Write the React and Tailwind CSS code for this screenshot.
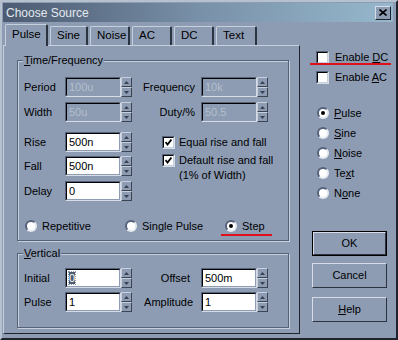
import React from "react";

const Spinner = () => (
  <div className="flex flex-col w-[11px] h-[20px]">
    {[0, 1].map((i) => (
      <div
        key={i}
        className="flex-1 flex items-center justify-center bg-[#8d9cb3] border border-t-[#c6d0dc] border-l-[#c6d0dc] border-r-[#3c4454] border-b-[#3c4454]"
      >
        <svg width="5" height="3" viewBox="0 0 5 3">
          {i === 0 ? (
            <polygon points="2.5,0 5,3 0,3" fill="#3a4150" />
          ) : (
            <polygon points="0,0 5,0 2.5,3" fill="#3a4150" />
          )}
        </svg>
      </div>
    ))}
  </div>
);

const Field = ({ value, disabled, selected }) => (
  <div className="flex items-center">
    <div className="w-[56px] h-[20px] border border-t-[#56627a] border-l-[#56627a] border-r-[#d6dde6] border-b-[#d6dde6]">
      <div
        className={`h-full border border-t-black border-l-black border-r-[#8d9cb3] border-b-[#8d9cb3] pl-[2px] leading-[16px] ${
          disabled ? "bg-[#8d9cb3] text-[#b4bfcd]" : "bg-white text-black"
        }`}
      >
        {selected ? (
          <span className="bg-[#4c5b71] text-white outline outline-1 outline-dotted outline-[#8d9cb3]">
            {value}
          </span>
        ) : (
          value
        )}
      </div>
    </div>
    <Spinner />
  </div>
);

const Check = ({ checked }) => (
  <div className="w-[13px] h-[13px] shrink-0 bg-white border border-t-[#56627a] border-l-[#56627a] border-r-[#d6dde6] border-b-[#d6dde6]">
    <div className="w-full h-full border border-t-black border-l-black border-r-[#c6d0dc] border-b-[#c6d0dc] flex items-center justify-center">
      {checked && (
        <svg width="7" height="7" viewBox="0 0 7 7">
          <path d="M0.5 3 L2.5 5.5 L6.5 0.5" stroke="black" strokeWidth="1.8" fill="none" />
        </svg>
      )}
    </div>
  </div>
);

const Radio = ({ checked }) => (
  <div className="w-[12px] h-[12px] shrink-0 rounded-full bg-white border-2 border-t-[#56627a] border-l-[#56627a] border-r-[#e4e9ef] border-b-[#e4e9ef] flex items-center justify-center">
    {checked && <div className="w-[4px] h-[4px] rounded-full bg-black" />}
  </div>
);

const Group = ({ label, className, children }) => (
  <div
    className={`relative border border-[#56627a] shadow-[1px_1px_0_#c6d0dc,inset_1px_1px_0_#c6d0dc] ${className}`}
  >
    <div className="absolute -top-[8px] left-[5px] bg-[#8d9cb3] px-[1px] leading-[14px]">
      {label}
    </div>
    {children}
  </div>
);

const Button = ({ children, isDefault }) => (
  <div
    className={`w-[75px] h-[25px] ${isDefault ? "border border-black" : ""}`}
  >
    <div className="h-full flex items-center justify-center border border-t-[#d6dde6] border-l-[#d6dde6] border-r-[#2c3340] border-b-[#2c3340]">
      {children}
    </div>
  </div>
);

const tabs = [
  ["Pulse", 43],
  ["Sine", 38],
  ["Noise", 40],
  ["AC", 40],
  ["DC", 40],
  ["Text", 41],
];

export default function App() {
  return (
    <div
      className="w-[398px] h-[340px] bg-[#8d9cb3] text-black text-[11px] border-2 border-t-[#b6c1cf] border-l-[#b6c1cf] border-r-[#1e232c] border-b-[#1e232c] pl-[1px] pt-[1px]"
      style={{ fontFamily: '"Liberation Sans", Arial, sans-serif' }}
    >
      <div className="h-[19px] mr-[3px] flex items-center justify-between bg-gradient-to-r from-[#4c5b71] via-[#7890a8] to-[#96b8cc] pl-[3px] pr-[2px]">
        <span className="text-[#e4e9f0] text-[12px]">Choose Source</span>
        <div className="w-[16px] h-[14px] bg-[#8d9cb3] border border-t-[#d6dde6] border-l-[#d6dde6] border-r-[#1e232c] border-b-[#1e232c] flex items-center justify-center">
          <svg width="8" height="7" viewBox="0 0 8 7">
            <path d="M0.5 0.5 L7.5 6.5 M7.5 0.5 L0.5 6.5" stroke="black" strokeWidth="1.6" />
          </svg>
        </div>
      </div>

      <div className="flex">
        <div className="w-[297px]">
          <div className="flex items-end h-[21px] pl-[2px] mt-[2px]">
            {tabs.map(([name, w], i) => (
              <div
                key={name}
                style={{ width: w }}
                className={`relative bg-[#8d9cb3] border-t border-l border-r-2 border-t-[#c6d0dc] border-l-[#c6d0dc] border-r-[#2c3340] rounded-t-[2px] pl-[6px] mr-[2px] text-[11.5px] ${
                  i === 0
                    ? "h-[22px] -mb-[1px] z-10 leading-[19px]"
                    : "h-[19px] leading-[17px]"
                }`}
              >
                {name}
              </div>
            ))}
          </div>
          <div className="h-[289px] border border-t-[#c6d0dc] border-l-[#c6d0dc] border-r-[#1e232c] border-b-[#1e232c] pl-[13px] pt-[14px] pr-[10px]">
            <Group
              label={
                <span>
                  <u>T</u>ime/Frequency
                </span>
              }
              className="h-[181px] pl-[6px] pt-[16px]"
            >
              <div className="flex items-center">
                <div className="w-[41px]">Period</div>
                <Field value="100u" disabled />
                <div className="w-[69px] text-right pr-[6px]">Frequency</div>
                <Field value="10k" disabled />
              </div>
              <div className="flex items-center mt-[5px]">
                <div className="w-[41px]">Width</div>
                <Field value="50u" disabled />
                <div className="w-[69px] text-right pr-[6px]">Duty/%</div>
                <Field value="50.5" disabled />
              </div>
              <div className="flex mt-[10px]">
                <div className="flex flex-col gap-[4px]">
                  <div className="flex items-center">
                    <div className="w-[41px]">Rise</div>
                    <Field value="500n" />
                  </div>
                  <div className="flex items-center">
                    <div className="w-[41px]">Fall</div>
                    <Field value="500n" />
                  </div>
                  <div className="flex items-center mt-[1px]">
                    <div className="w-[41px]">Delay</div>
                    <Field value="0" />
                  </div>
                </div>
                <div className="ml-[30px] mt-[4px] flex flex-col">
                  <div className="flex items-center gap-[4px] h-[13px]">
                    <Check checked />
                    <span>Equal rise and fall</span>
                  </div>
                  <div className="flex gap-[4px] mt-[5px]">
                    <Check checked />
                    <span className="leading-[15px] -mt-[1px]">
                      Default rise and fall
                      <br />
                      (1% of Width)
                    </span>
                  </div>
                </div>
              </div>
              <div className="flex items-center mt-[17px] pl-[1px]">
                <div className="w-[100px] flex items-center gap-[5px]">
                  <Radio />
                  <span>Repetitive</span>
                </div>
                <div className="w-[100px] flex items-center gap-[5px]">
                  <Radio />
                  <span>Single Pulse</span>
                </div>
                <div className="relative flex items-center gap-[5px]">
                  <Radio checked />
                  <span>Step</span>
                  <div className="absolute left-[-4px] top-[16px] w-[51px] h-[2px] bg-[#e0101a]" />
                </div>
              </div>
            </Group>

            <Group
              label={
                <span>
                  <u>V</u>ertical
                </span>
              }
              className="h-[75px] mt-[12px] pl-[6px] pt-[14px]"
            >
              <div className="flex items-center">
                <div className="w-[41px]">Initial</div>
                <Field value="0" selected />
                <div className="w-[69px] text-right pr-[11px]">Offset</div>
                <Field value="500m" />
              </div>
              <div className="flex items-center mt-[4px]">
                <div className="w-[41px]">Pulse</div>
                <Field value="1" />
                <div className="w-[69px] text-right pr-[8px]">Amplitude</div>
                <Field value="1" />
              </div>
            </Group>
          </div>
        </div>

        <div className="flex-1 pl-[12px] pt-[28px]">
          <div className="relative flex items-center gap-[6px] pl-[4px] h-[14px]">
            <Check />
            <span>
              Enable <u>D</u>C
            </span>
            <div className="absolute left-[-2px] top-[13px] w-[81px] h-[2px] bg-[#e0101a]" />
          </div>
          <div className="flex items-center gap-[6px] pl-[4px] h-[14px] mt-[6px]">
            <Check />
            <span>
              Enable <u>A</u>C
            </span>
          </div>
          <div className="flex flex-col gap-[6px] mt-[22px] pl-[5px]">
            {[
              [<><u>P</u>ulse</>, true],
              [<><u>S</u>ine</>, false],
              [<><u>N</u>oise</>, false],
              [<>Te<u>x</u>t</>, false],
              [<>N<u>o</u>ne</>, false],
            ].map(([label, on], i) => (
              <div key={i} className="flex items-center gap-[5px] h-[14px]">
                <Radio checked={on} />
                <span>{label}</span>
              </div>
            ))}
          </div>
          <div className="flex flex-col gap-[7px] mt-[31px]">
            <Button isDefault>OK</Button>
            <Button>Cancel</Button>
            <div className="mt-[2px]">
              <Button>
                <span>
                  <u>H</u>elp
                </span>
              </Button>
            </div>
          </div>
        </div>
      </div>
    </div>
  );
}
